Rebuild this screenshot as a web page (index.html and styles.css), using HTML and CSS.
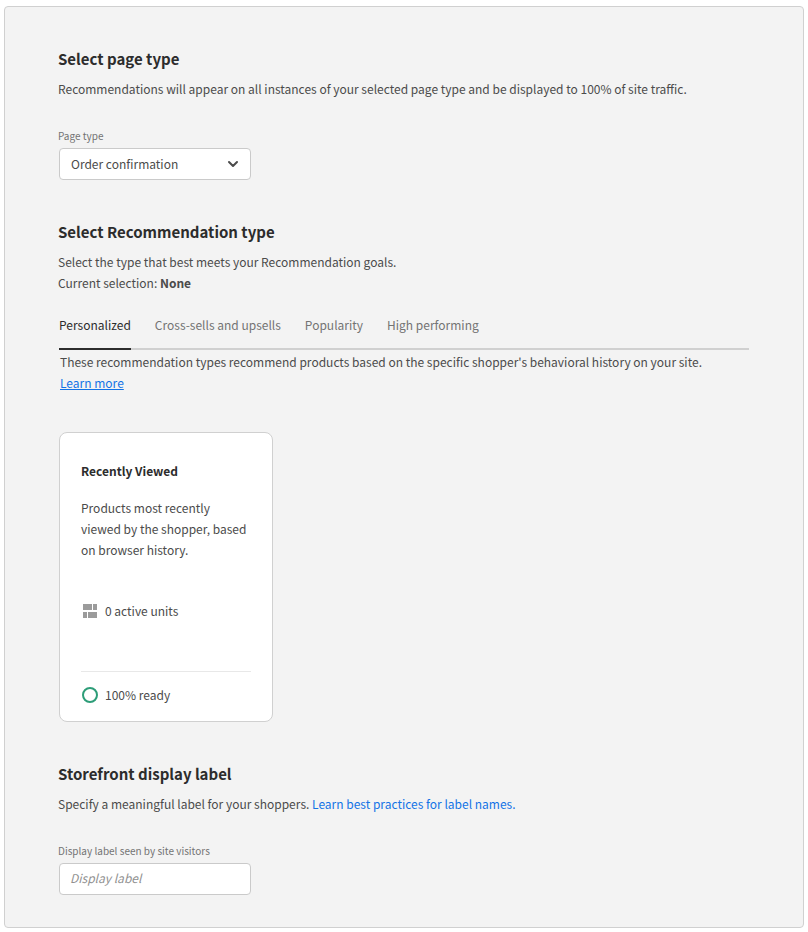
FILE: index.html
```html
<!DOCTYPE html>
<html lang="en">
<head>
<meta charset="utf-8">
<meta name="viewport" content="width=device-width, initial-scale=1">
<title>Recommendation settings</title>
<link rel="stylesheet" href="styles.css">
</head>
<body>
<main class="panel">
  <section class="section">
    <h2>Select page type</h2>
    <p class="copy">Recommendations will appear on all instances of your selected page type and be displayed to 100% of site traffic.</p>
    <div class="field">
      <label for="page-type">Page type</label>
      <div class="picker">
        <select id="page-type"><option>Order confirmation</option></select>
        <svg class="chevron" viewBox="0 0 12 8" aria-hidden="true"><path d="M2 2l4 4 4-4"/></svg>
      </div>
    </div>
  </section>

  <section class="section">
    <h2>Select Recommendation type</h2>
    <p class="copy">Select the type that best meets your Recommendation goals.<br>Current selection: <strong>None</strong></p>
    <div class="tabs" role="tablist">
      <button class="tab active" role="tab" aria-selected="true">Personalized</button>
      <button class="tab" role="tab" aria-selected="false">Cross-sells and upsells</button>
      <button class="tab" role="tab" aria-selected="false">Popularity</button>
      <button class="tab" role="tab" aria-selected="false">High performing</button>
    </div>
    <p class="copy tab-copy">These recommendation types recommend products based on the specific shopper's behavioral history on your site. <a class="underlined" href="#">Learn more</a></p>
    <article class="card">
      <h3>Recently Viewed</h3>
      <p class="card-copy">Products most recently viewed by the shopper, based on browser history.</p>
      <div class="stat">
        <svg viewBox="0 0 16 16" aria-hidden="true"><path fill="#9b9b9b" d="M1 1h9v6H1zM11 1h4v6h-4zM1 9h4v6H1zM6 9h9v6H6z"/></svg>
        <span>0 active units</span>
      </div>
      <div class="stat ready">
        <svg viewBox="0 0 16 16" aria-hidden="true"><circle cx="8" cy="8" r="7" fill="none" stroke="#2d9d78" stroke-width="2"/></svg>
        <span>100% ready</span>
      </div>
    </article>
  </section>

  <section class="section">
    <h2>Storefront display label</h2>
    <p class="copy">Specify a meaningful label for your shoppers. <a href="#">Learn best practices for label names.</a></p>
    <div class="field">
      <label for="display-label">Display label seen by site visitors</label>
      <input id="display-label" type="text" placeholder="Display label">
    </div>
  </section>
</main>
</body>
</html>
```
FILE: styles.css
```css
* { box-sizing: border-box; }
body {
  margin: 6px 4px 4px;
  background: #fff;
  color: #4b4b4b;
  font: 12px/21px "Noto Sans CJK SC", "Noto Sans", sans-serif;
}
h2, h3, p { margin: 0; }
h2 { color: #2c2c2c; font-size: 15px; line-height: 24px; font-weight: 700; }
a { color: #1473e6; text-decoration: none; }
.underlined { text-decoration: underline; white-space: nowrap; }
.panel {
  display: flex;
  flex-direction: column;
  gap: 40px;
  padding: 40px 54px 32px 53px;
  background: #f3f3f3;
  border: 1px solid #d0d0d0;
  border-radius: 4px;
}
.copy { margin-top: 7px; }
.field {
  display: flex;
  flex-direction: column;
  align-items: flex-start;
  gap: 4px;
  margin-top: 29px;
}
.field label { color: #747474; font-size: 10px; line-height: 16px; }
.picker { display: grid; align-items: center; width: 192px; margin-left: 1px; }
.picker > * { grid-area: 1 / 1; }
select, input {
  width: 192px;
  height: 32px;
  padding: 0 11px 2px;
  background: #fff;
  border: 1px solid #cacaca;
  border-radius: 4px;
  color: #4b4b4b;
  font: inherit;
}
select { appearance: none; }
input { margin-left: 1px; padding: 0 10px 3px; }
input::placeholder { color: #909090; font-style: italic; opacity: 1; }
.chevron {
  justify-self: end;
  width: 12px;
  height: 8px;
  margin-right: 12px;
  fill: none;
  stroke: #4b4b4b;
  stroke-width: 2;
  stroke-linecap: round;
  stroke-linejoin: round;
  pointer-events: none;
}
.tabs {
  display: flex;
  gap: 24px;
  margin-top: 8px;
  margin-left: 1px;
  border-bottom: 2px solid #d0d0d0;
}
.tab {
  height: 49px;
  margin-bottom: -2px;
  padding: 0 0 1px;
  background: none;
  border: 0;
  border-bottom: 2px solid transparent;
  color: #747474;
  font: inherit;
  white-space: nowrap;
}
.tab.active { color: #2c2c2c; border-color: #2c2c2c; }
.tab-copy { margin: 1px 2px 0; }
.card {
  width: 214px;
  margin: 39px 0 0 1px;
  padding: 27px 21px 16px;
  background: #fff;
  border: 1px solid #d0d0d0;
  border-radius: 8px;
}
.card h3 { color: #2c2c2c; font-size: 12px; line-height: 21px; }
.card-copy { margin-top: 16px; }
.stat { display: flex; align-items: center; gap: 7px; margin-top: 40px; }
.stat svg { width: 16px; height: 16px; margin-left: 1px; }
.ready { margin-top: 50px; padding-top: 12px; border-top: 1px solid #e8e8e8; }
```
